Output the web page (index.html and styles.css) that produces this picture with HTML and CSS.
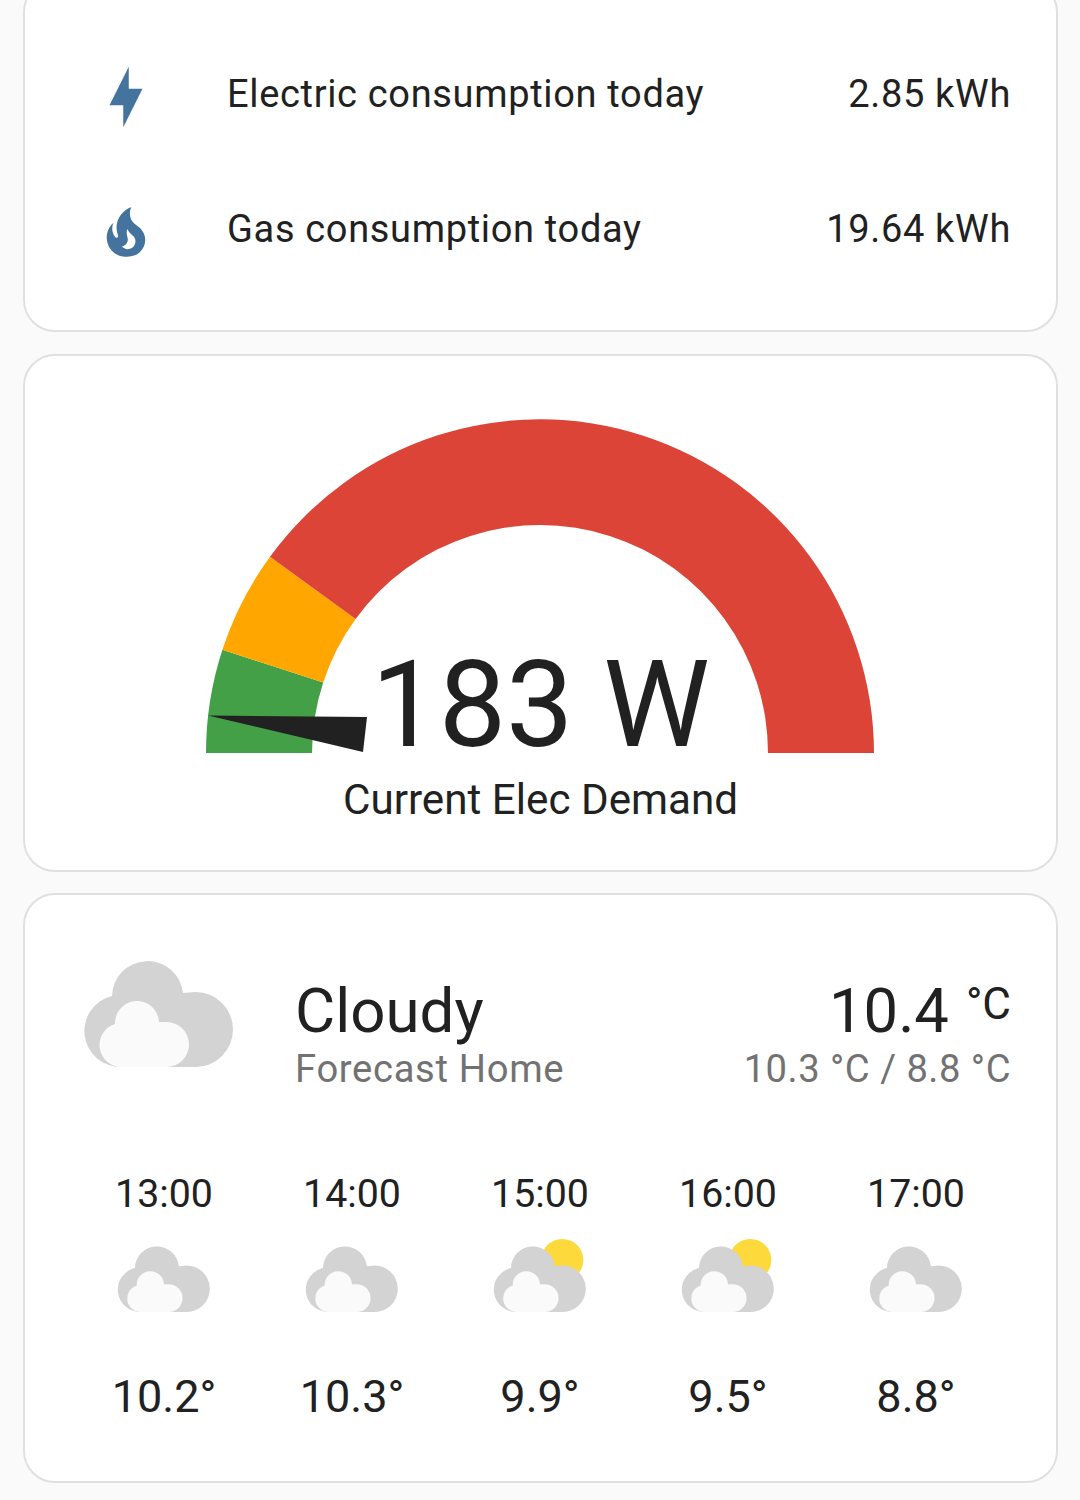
FILE: index.html
```html
<!DOCTYPE html>
<html lang="en">
<head>
    <meta charset="UTF-8">
    <meta name="viewport" content="width=device-width, initial-scale=1.0">
    <title>Home Dashboard</title>
    <link rel="stylesheet" href="styles.css">
</head>
<body>

    <svg class="defs" width="0" height="0">
        <symbol id="cloud" class="open-symbol" viewBox="0 0 148 105">
            <path class="cloud-back" d="M36 105A36 36 0 0 1 27 34A35.600 35.600 0 0 1 98 31L110.500 30A37.500 37.500 0 0 1 110.500 105Z"/>
            <path class="cloud-front" d="M36 105A22 22 0 0 1 30 62A22 22 0 0 1 74 60L81.500 60A22.500 22.500 0 0 1 81.500 105Z"/>
        </symbol>
        <symbol id="cloud-sun" class="open-symbol" viewBox="0 0 148 105">
            <circle class="sun" cx="110" cy="21" r="34"/>
            <use href="#cloud"/>
        </symbol>
    </svg>

    <div class="page">

        <!-- Energy today -->
        <div class="card energy-card">
            <div class="energy-row">
                <svg class="energy-icon" viewBox="0 0 24 24"><path d="M11 15H6L13 1V9H18L11 23V15Z"/></svg>
                <span class="energy-name">Electric consumption today</span>
                <span class="energy-value">2.85 kWh</span>
            </div>
            <div class="energy-row">
                <svg class="energy-icon" viewBox="0 0 24 24"><path d="M17.66 11.2C17.43 10.9 17.15 10.64 16.89 10.38C16.22 9.78 15.46 9.35 14.82 8.72C13.33 7.26 13 4.85 13.95 3C13 3.23 12.17 3.75 11.46 4.32C8.87 6.4 7.85 10.07 9.07 13.22C9.11 13.32 9.15 13.42 9.15 13.55C9.15 13.77 9 13.97 8.8 14.05C8.57 14.15 8.33 14.09 8.14 13.93C8.08 13.88 8.04 13.83 8 13.76C6.87 12.33 6.69 10.28 7.45 8.64C5.78 10 4.87 12.3 5 14.47C5.06 14.97 5.12 15.47 5.29 15.97C5.43 16.57 5.7 17.17 6 17.7C7.08 19.43 8.95 20.67 10.96 20.92C13.1 21.19 15.39 20.8 17.03 19.32C18.86 17.66 19.5 15 18.56 12.72L18.43 12.46C18.28 12.13 17.66 11.2 17.66 11.2M14.5 17.5C14.22 17.74 13.76 18 13.4 18.1C12.28 18.5 11.16 17.94 10.5 17.28C11.69 17 12.4 16.12 12.61 15.23C12.78 14.43 12.46 13.77 12.33 13C12.21 12.26 12.23 11.63 12.5 10.94C12.69 11.32 12.89 11.7 13.13 12C13.9 13 15.11 13.44 15.37 14.8C15.41 14.94 15.43 15.08 15.43 15.23C15.46 16.05 15.1 16.95 14.5 17.5H14.5Z"/></svg>
                <span class="energy-name">Gas consumption today</span>
                <span class="energy-value">19.64 kWh</span>
            </div>
        </div>

        <!-- Gauge -->
        <div class="card gauge-card">
            <div class="gauge">
                <svg class="gauge-svg" viewBox="1 0 670 336" width="670" height="336">
                    <path fill="#43a047" d="M1 335A334 334 0 0 1 17.400 231.800L118.200 264.500A228 228 0 0 0 107 335Z"/>
                    <path fill="#ffa600" d="M17.400 231.800A334 334 0 0 1 65 138.700L150.600 200.900A228 228 0 0 0 118.200 264.500Z"/>
                    <path fill="#db4437" d="M65 138.700A334 334 0 0 1 669 335H563A228 228 0 0 0 150.600 200.900Z"/>
                    <path fill="#212121" d="M3 297.500L162 299L158 334Z"/>
                </svg>
                <span class="gauge-value">183 W</span>
            </div>
            <div class="gauge-name">Current Elec Demand</div>
        </div>

        <!-- Weather -->
        <div class="card weather-card">
            <div class="weather-top">
                <svg class="weather-icon"><use href="#cloud"/></svg>
                <div class="weather-info">
                    <div class="weather-state">Cloudy</div>
                    <div class="weather-sub">Forecast Home</div>
                </div>
                <div class="weather-temps">
                    <div class="weather-temp">10.4<span class="weather-unit">°C</span></div>
                    <div class="weather-sub weather-range">10.3 °C / 8.8 °C</div>
                </div>
            </div>
            <div class="forecast">
                <div class="forecast-col">
                    <div class="forecast-time">13:00</div>
                    <svg class="forecast-icon"><use href="#cloud"/></svg>
                    <div class="forecast-temp">10.2°</div>
                </div>
                <div class="forecast-col">
                    <div class="forecast-time">14:00</div>
                    <svg class="forecast-icon"><use href="#cloud"/></svg>
                    <div class="forecast-temp">10.3°</div>
                </div>
                <div class="forecast-col">
                    <div class="forecast-time">15:00</div>
                    <svg class="forecast-icon"><use href="#cloud-sun"/></svg>
                    <div class="forecast-temp">9.9°</div>
                </div>
                <div class="forecast-col">
                    <div class="forecast-time">16:00</div>
                    <svg class="forecast-icon"><use href="#cloud-sun"/></svg>
                    <div class="forecast-temp">9.5°</div>
                </div>
                <div class="forecast-col">
                    <div class="forecast-time">17:00</div>
                    <svg class="forecast-icon"><use href="#cloud"/></svg>
                    <div class="forecast-temp">8.8°</div>
                </div>
            </div>
        </div>

    </div>

</body>
</html>
```

FILE: styles.css
```css
/* General Styles */
* {
    margin: 0;
    padding: 0;
    box-sizing: border-box;
    font-family: Roboto, "Liberation Sans", sans-serif;
}

html, body {
    height: 1500px;
    overflow: hidden;
}

body {
    background-color: #fafafa;
    color: #212121;
}

.defs {
    position: absolute;
}

.open-symbol {
    overflow: visible;
}

.page {
    display: flex;
    flex-direction: column;
    gap: 21.5px;
    margin-top: -20px;
    padding: 0 22px 0 23px;
}

.card {
    background: white;
    border: 2px solid #e0e0e0;
    border-radius: 32px;
}

/* Energy rows */
.energy-card {
    height: 352px;
    padding: 45px 45px 0 68px;
}

.energy-row {
    display: flex;
    align-items: center;
    height: 135px;
}

.energy-icon {
    width: 66px;
    height: 66px;
    margin-top: 4px;
    fill: #44739e;
    flex-shrink: 0;
}

.energy-name {
    flex: 1;
    margin-left: 68px;
    margin-bottom: 2px;
    font-size: 38px;
    letter-spacing: 0.67px;
}

.energy-value {
    margin-bottom: 2px;
    font-size: 38px;
    letter-spacing: 0.67px;
}

/* Gauge */
.gauge-card {
    height: 518px;
    padding-top: 62.5px;
    text-align: center;
}

.gauge {
    position: relative;
    width: 670px;
    height: 336px;
    margin: 0 auto;
}

.gauge-svg {
    display: block;
}

.gauge-value {
    position: absolute;
    left: 0;
    right: 0;
    bottom: -11px;
    font-size: 120px;
    line-height: 120px;
}

.gauge-name {
    margin-top: 21px;
    font-size: 42.2px;
    line-height: 50px;
}

/* Weather */
.weather-card {
    height: 590px;
    padding: 64px 45px 0 59px;
}

.weather-top {
    display: flex;
    align-items: flex-start;
}

.weather-icon {
    width: 148px;
    height: 105px;
    margin-top: 3px;
    margin-left: 1px;
    flex-shrink: 0;
    overflow: visible;
}

.cloud-back {
    fill: #d3d3d3;
}

.cloud-front {
    fill: #fafafa;
}

.sun {
    fill: #fdd93c;
}

.weather-info {
    flex: 1;
    margin-left: 62px;
    padding-top: 20px;
}

.weather-state {
    font-size: 61.8px;
    line-height: 64px;
}

.weather-sub {
    margin-top: 2px;
    font-size: 38.2px;
    line-height: 48px;
    letter-spacing: 0.67px;
    color: #727272;
}

.weather-range {
    letter-spacing: 0.5px;
}

.weather-temps {
    padding-top: 20px;
    text-align: right;
}

.weather-temp {
    font-size: 61.5px;
    line-height: 64px;
}

.weather-unit {
    margin-left: 17px;
    font-size: 44px;
    vertical-align: 13px;
    line-height: 0;
}

.forecast {
    display: grid;
    grid-template-columns: repeat(5, 188px);
    margin-top: 79px;
    margin-left: -14px;
}

.forecast-col {
    display: flex;
    flex-direction: column;
    align-items: center;
}

.forecast-time {
    font-size: 39.3px;
    line-height: 44px;
}

.forecast-icon {
    width: 92px;
    height: 65px;
    margin-top: 31px;
    overflow: visible;
}

.forecast-temp {
    margin-top: 60px;
    font-size: 45px;
    line-height: 50px;
}
```
